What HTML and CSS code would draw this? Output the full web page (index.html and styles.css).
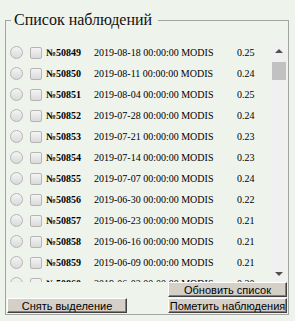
FILE: index.html
```html
<!DOCTYPE html>
<html lang="ru">
<head>
  <meta charset="UTF-8">
  <title>Список наблюдений</title>
  <link rel="stylesheet" href="styles.css">
</head>
<body>
  <fieldset class="panel">
    <legend>Список наблюдений</legend>
    <div class="list-wrap">
      <div class="list">
        <div class="row"><span class="radio"></span><span class="check"></span><b class="num">№50849</b><span class="date">2019-08-18 00:00:00 MODIS</span><span class="val">0.25</span></div>
        <div class="row"><span class="radio"></span><span class="check"></span><b class="num">№50850</b><span class="date">2019-08-11 00:00:00 MODIS</span><span class="val">0.24</span></div>
        <div class="row"><span class="radio"></span><span class="check"></span><b class="num">№50851</b><span class="date">2019-08-04 00:00:00 MODIS</span><span class="val">0.25</span></div>
        <div class="row"><span class="radio"></span><span class="check"></span><b class="num">№50852</b><span class="date">2019-07-28 00:00:00 MODIS</span><span class="val">0.24</span></div>
        <div class="row"><span class="radio"></span><span class="check"></span><b class="num">№50853</b><span class="date">2019-07-21 00:00:00 MODIS</span><span class="val">0.23</span></div>
        <div class="row"><span class="radio"></span><span class="check"></span><b class="num">№50854</b><span class="date">2019-07-14 00:00:00 MODIS</span><span class="val">0.23</span></div>
        <div class="row"><span class="radio"></span><span class="check"></span><b class="num">№50855</b><span class="date">2019-07-07 00:00:00 MODIS</span><span class="val">0.24</span></div>
        <div class="row"><span class="radio"></span><span class="check"></span><b class="num">№50856</b><span class="date">2019-06-30 00:00:00 MODIS</span><span class="val">0.22</span></div>
        <div class="row"><span class="radio"></span><span class="check"></span><b class="num">№50857</b><span class="date">2019-06-23 00:00:00 MODIS</span><span class="val">0.21</span></div>
        <div class="row"><span class="radio"></span><span class="check"></span><b class="num">№50858</b><span class="date">2019-06-16 00:00:00 MODIS</span><span class="val">0.21</span></div>
        <div class="row"><span class="radio"></span><span class="check"></span><b class="num">№50859</b><span class="date">2019-06-09 00:00:00 MODIS</span><span class="val">0.21</span></div>
        <div class="row"><span class="radio"></span><span class="check"></span><b class="num">№50860</b><span class="date">2019-06-02 00:00:00 MODIS</span><span class="val">0.20</span></div>
      </div>
      <div class="scrollbar">
        <div class="sb-btn"><span class="arrow-up"></span></div>
        <div class="sb-track"><div class="sb-thumb"></div></div>
        <div class="sb-btn"><span class="arrow-down"></span></div>
      </div>
    </div>
    <div class="actions">
      <button class="btn btn-left">Снять выделение</button>
      <div class="btn-col">
        <button class="btn">Обновить список</button>
        <button class="btn">Пометить наблюдения</button>
      </div>
    </div>
  </fieldset>
</body>
</html>
```

FILE: styles.css
```css
body {
  margin: 0;
  background: #eef3ec;
  font-family: 'Liberation Serif', 'Times New Roman', serif;
  color: #000;
}
.panel {
  margin: 11px 0 0 5px;
  width: 284px;
  box-sizing: border-box;
  padding: 0 1px 1px 1px;
  border: 1px solid #a3a3a3;
}
legend {
  margin-left: 4px;
  padding: 0 6px 0 3px;
  font-family: 'Liberation Serif', 'Times New Roman', serif;
  font-size: 16px;
  line-height: 18px;
  color: #111;
}
.list-wrap {
  display: flex;
  height: 240px;
  margin-top: 13px;
  margin-right: 1px;
}
.list {
  flex: 1;
  overflow: hidden;
}
.row {
  display: flex;
  align-items: center;
  height: 21px;
  font-family: 'Liberation Serif', 'Times New Roman', serif;
  font-size: 10px;
  padding-left: 3px;
}
.radio {
  width: 11px;
  height: 11px;
  border: 1px solid #b5b5b5;
  border-radius: 50%;
  background: linear-gradient(#f4f4f4, #dadada);
  margin-right: 7px;
}
.check {
  width: 10px;
  height: 10px;
  border: 1px solid #b5b5b5;
  border-radius: 2px;
  background: linear-gradient(#f4f4f4, #dadada);
  margin-right: 4px;
}
.num {
  width: 48px;
}
.date {
  width: 143px;
}
.scrollbar {
  width: 14px;
  display: flex;
  flex-direction: column;
  background: #f0f0f0;
}
.sb-btn {
  height: 17px;
  display: flex;
  align-items: center;
  justify-content: center;
}
.arrow-up {
  border-left: 4px solid transparent;
  border-right: 4px solid transparent;
  border-bottom: 4px solid #505050;
}
.arrow-down {
  border-left: 4px solid transparent;
  border-right: 4px solid transparent;
  border-top: 4px solid #505050;
}
.sb-track {
  flex: 1;
  padding-top: 3px;
}
.sb-thumb {
  height: 18px;
  background: #c1c1c1;
}
.actions {
  display: flex;
  justify-content: space-between;
  align-items: flex-end;
  height: 31px;
}
.btn-col {
  display: flex;
  flex-direction: column;
  gap: 1px;
}
.btn {
  width: 119px;
  height: 15px;
  padding: 0;
  font-family: 'Liberation Sans', Arial, sans-serif;
  font-size: 11px;
  line-height: 12px;
  color: #000;
  background: #d4d0c8;
  border: 1px solid;
  border-color: #fff #404040 #404040 #fff;
  box-shadow: inset -1px -1px #808080;
}
.btn-left {
  width: 120px;
}
```
